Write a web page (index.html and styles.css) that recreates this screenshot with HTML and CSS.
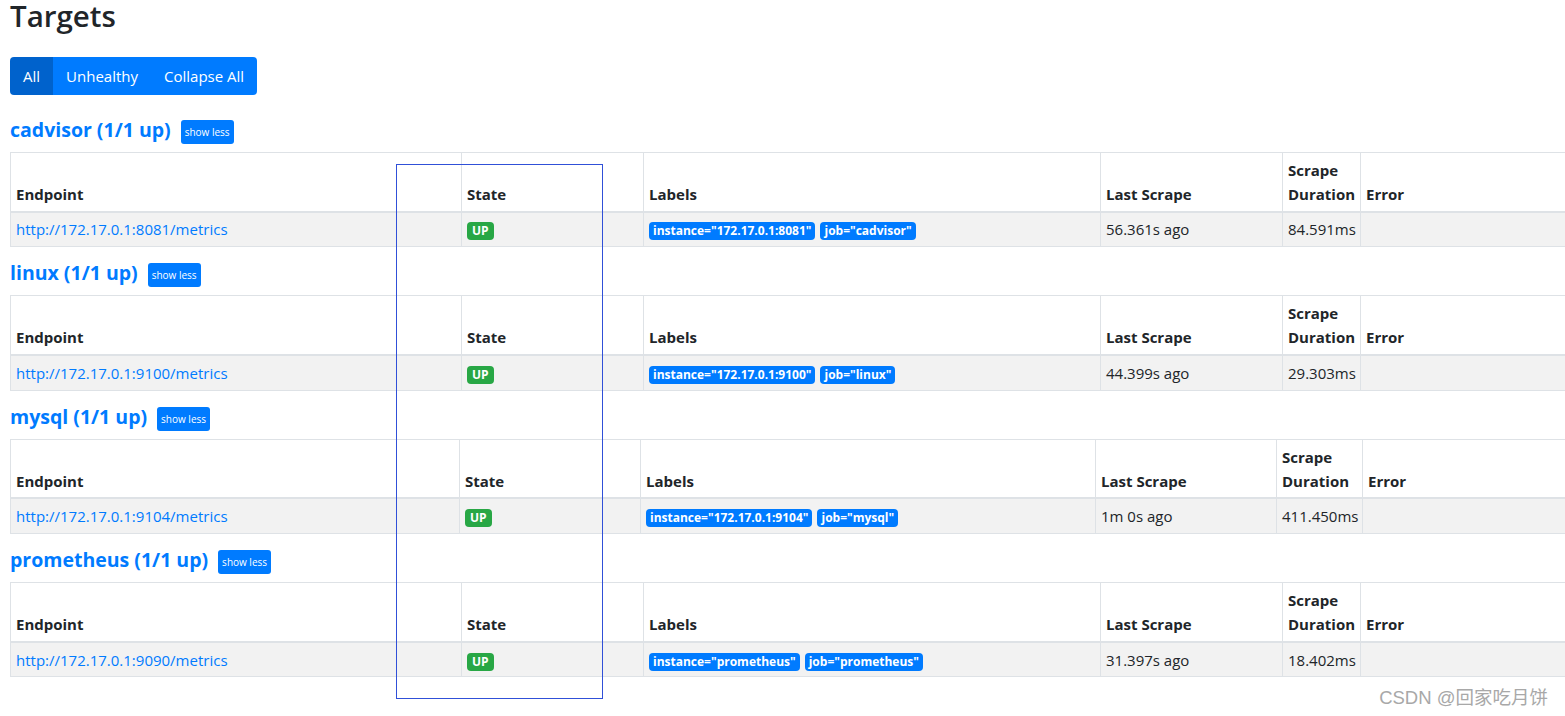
FILE: index.html
```html
<!DOCTYPE html>
<html lang="en">
<head>
<meta charset="utf-8">
<title>Targets</title>
<link rel="stylesheet" href="styles.css">
</head>
<body>
<main class="page">
  <h1 class="title">Targets</h1>
  <div class="btn-group">
    <button class="btn active">All</button><button class="btn">Unhealthy</button><button class="btn">Collapse All</button>
  </div>

  <section class="pool">
    <div class="pool-head"><a class="pool-title" href="#cadvisor">cadvisor (1/1 up)</a><button class="btn-xs">show less</button></div>
    <table class="targets">
      <colgroup><col class="c-end"><col class="c-state"><col class="c-labels"><col class="c-last"><col class="c-dur"><col class="c-err"></colgroup>
      <thead><tr><th>Endpoint</th><th>State</th><th>Labels</th><th>Last Scrape</th><th>Scrape Duration</th><th>Error</th></tr></thead>
      <tbody><tr>
        <td><a class="endpoint" href="#">http://172.17.0.1:8081/metrics</a></td>
        <td><span class="badge up">UP</span></td>
        <td><span class="badge lbl">instance="172.17.0.1:8081"</span><span class="badge lbl">job="cadvisor"</span></td>
        <td>56.361s ago</td><td>84.591ms</td><td></td>
      </tr></tbody>
    </table>
  </section>

  <section class="pool">
    <div class="pool-head"><a class="pool-title" href="#linux">linux (1/1 up)</a><button class="btn-xs">show less</button></div>
    <table class="targets">
      <colgroup><col class="c-end"><col class="c-state"><col class="c-labels"><col class="c-last"><col class="c-dur"><col class="c-err"></colgroup>
      <thead><tr><th>Endpoint</th><th>State</th><th>Labels</th><th>Last Scrape</th><th>Scrape Duration</th><th>Error</th></tr></thead>
      <tbody><tr>
        <td><a class="endpoint" href="#">http://172.17.0.1:9100/metrics</a></td>
        <td><span class="badge up">UP</span></td>
        <td><span class="badge lbl">instance="172.17.0.1:9100"</span><span class="badge lbl">job="linux"</span></td>
        <td>44.399s ago</td><td>29.303ms</td><td></td>
      </tr></tbody>
    </table>
  </section>

  <section class="pool">
    <div class="pool-head"><a class="pool-title" href="#mysql">mysql (1/1 up)</a><button class="btn-xs">show less</button></div>
    <table class="targets alt">
      <colgroup><col class="c-end"><col class="c-state"><col class="c-labels"><col class="c-last"><col class="c-dur"><col class="c-err"></colgroup>
      <thead><tr><th>Endpoint</th><th>State</th><th>Labels</th><th>Last Scrape</th><th>Scrape Duration</th><th>Error</th></tr></thead>
      <tbody><tr>
        <td><a class="endpoint" href="#">http://172.17.0.1:9104/metrics</a></td>
        <td><span class="badge up">UP</span></td>
        <td><span class="badge lbl">instance="172.17.0.1:9104"</span><span class="badge lbl">job="mysql"</span></td>
        <td>1m 0s ago</td><td>411.450ms</td><td></td>
      </tr></tbody>
    </table>
  </section>

  <section class="pool">
    <div class="pool-head"><a class="pool-title" href="#prometheus">prometheus (1/1 up)</a><button class="btn-xs">show less</button></div>
    <table class="targets">
      <colgroup><col class="c-end"><col class="c-state"><col class="c-labels"><col class="c-last"><col class="c-dur"><col class="c-err"></colgroup>
      <thead><tr><th>Endpoint</th><th>State</th><th>Labels</th><th>Last Scrape</th><th>Scrape Duration</th><th>Error</th></tr></thead>
      <tbody><tr>
        <td><a class="endpoint" href="#">http://172.17.0.1:9090/metrics</a></td>
        <td><span class="badge up">UP</span></td>
        <td><span class="badge lbl">instance="prometheus"</span><span class="badge lbl">job="prometheus"</span></td>
        <td>31.397s ago</td><td>18.402ms</td><td></td>
      </tr></tbody>
    </table>
  </section>
</main>
<div class="annot"></div>
<div class="watermark">CSDN @回家吃月饼</div>
</body>
</html>
```
FILE: styles.css
```css
html, body {
  margin: 0;
  padding: 0;
  overflow: hidden;
  background: #fff;
}
body {
  font-family: "Open Sans", "Noto Sans", sans-serif;
  font-size: 15px;
  line-height: 24px;
  color: #212529;
  position: relative;
  height: 716px;
}
.page {
  padding-left: 10px;
}
.title {
  margin: -3px 0 22px;
  font-size: 29.5px;
  font-weight: 600;
  line-height: 38px;
  color: #212529;
}
.btn-group {
  display: inline-flex;
  border-radius: 4px;
  overflow: hidden;
  margin-bottom: 25px;
  vertical-align: top;
}
.btn {
  font-family: inherit;
  font-size: 15px;
  line-height: 24px;
  padding: 7px 13px;
  border: 0;
  background: #007bff;
  color: #fff;
  cursor: pointer;
}
.btn.active {
  background: #0062cc;
}
.pool {
  margin-bottom: 16.2px;
}
.pool-head {
  display: flex;
  align-items: center;
  height: 24px;
  margin-bottom: 8px;
}
.pool-title {
  color: #007bff;
  font-weight: 700;
  font-size: 19.5px;
  line-height: 22px;
  padding-bottom: 4px;
  text-decoration: none;
  margin-right: 10px;
}
.btn-xs {
  font-family: inherit;
  font-size: 10px;
  line-height: 16px;
  padding: 4px 4px;
  border: 0;
  border-radius: 3px;
  background: #007bff;
  color: #fff;
  height: 24px;
}
.targets {
  border-collapse: collapse;
  table-layout: fixed;
  width: 1620px;
}
.c-end { width: 451px; }
.c-state { width: 182px; }
.c-labels { width: 457px; }
.c-last { width: 182px; }
.c-dur { width: 78px; }
.targets.alt .c-end { width: 449px; }
.targets.alt .c-state { width: 181px; }
.targets.alt .c-labels { width: 455px; }
.targets.alt .c-last { width: 181px; }
.targets.alt .c-dur { width: 86px; }
.targets th,
.targets td {
  border: 1px solid #dee2e6;
  padding: 4.8px 5px;
  text-align: left;
  white-space: normal;
}
.targets th {
  font-weight: 700;
  vertical-align: bottom;
  border-bottom: 2px solid #dee2e6;
}
.targets td {
  vertical-align: top;
}
.targets tbody tr {
  background: #f2f2f2;
}
.endpoint {
  color: #007bff;
  text-decoration: none;
}
.badge {
  display: inline-block;
  font-size: 12px;
  font-weight: 700;
  line-height: 1;
  padding: 3px 4px;
  border-radius: 4px;
  color: #fff;
  vertical-align: middle;
  white-space: nowrap;
}
.badge.up {
  background: #28a745;
  padding: 3px 5px;
}
.badge.lbl {
  background: #007bff;
  margin-right: 5px;
}
.annot {
  position: absolute;
  left: 396px;
  top: 164px;
  width: 205px;
  height: 533px;
  border: 1px solid #3050d8;
  pointer-events: none;
}
.watermark {
  position: absolute;
  right: 17px;
  top: 686px;
  font-family: "Liberation Sans", "Noto Sans CJK SC", sans-serif;
  font-size: 18.5px;
  line-height: 24px;
  color: #a8a8a8;
}
```
